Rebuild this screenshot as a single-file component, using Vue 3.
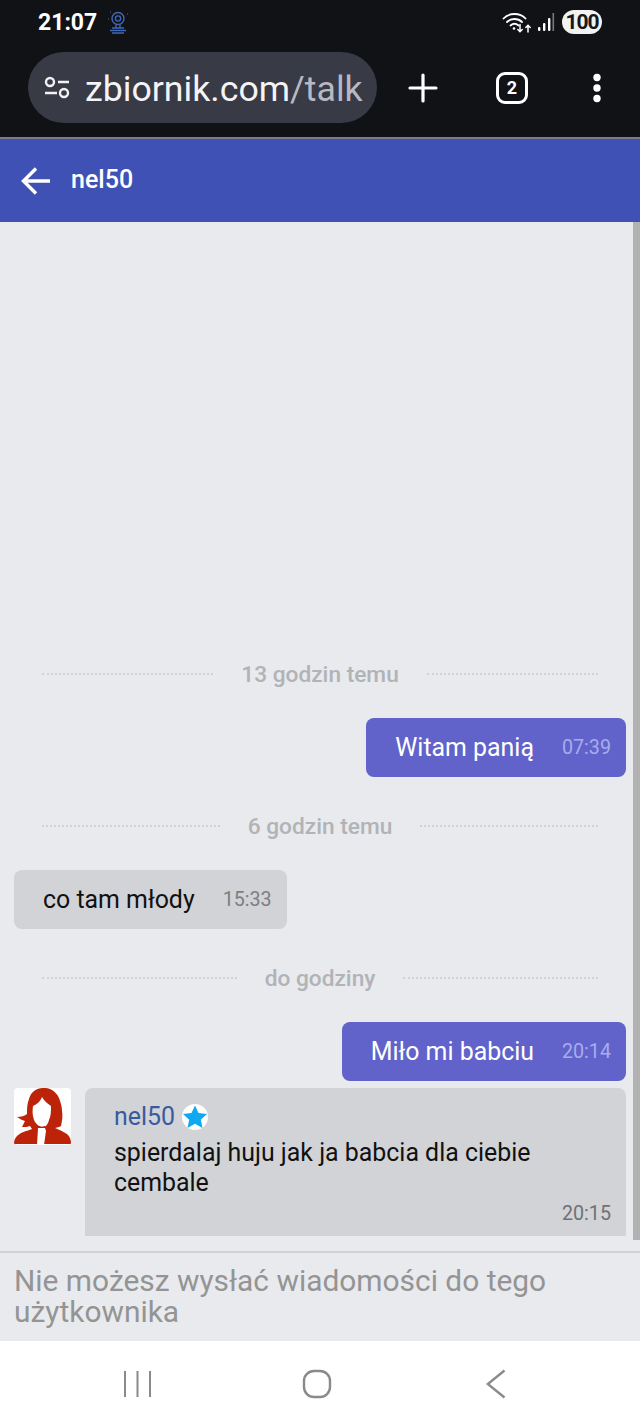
<template>
  <div class="phone">
    <!-- Status bar and browser chrome -->
    <div class="chrome">
      <div class="status">
        <div class="status-left">
          <span class="clock">21:07</span>
          <svg class="cam" width="26" height="26" viewBox="0 0 26 26" fill="none" stroke="#3f68b8" stroke-width="1.4">
            <circle cx="13" cy="9.500" r="6" />
            <circle cx="13" cy="9.500" r="2.600" />
            <path d="M11 15.500v3M15 15.500v3M7 19h12M5 21.500h16M7 24h12" />
            <path d="M3 10h1M22 5h1M5 3h1" stroke-width="1" />
          </svg>
        </div>
        <div class="status-right">
          <svg width="34" height="26" viewBox="0 0 34 26" fill="none" stroke="#fff" stroke-linecap="round">
            <path d="M1.500 9.500C7 3.500 18 3.500 23.500 9.500" stroke-width="1.800" />
            <path d="M5 13c4-4 11-4 15 0" stroke-width="1.800" />
            <path d="M8.500 16.500c2.500-2.200 5.500-2.200 8 0" stroke-width="1.800" />
            <circle cx="12" cy="19.500" r="1.300" fill="#fff" stroke="none" />
            <path d="M18 15.500v7M15.800 20.500l2.200 2.200 2.200-2.200" stroke-width="1.500" />
            <path d="M26 23v-6.500M23.800 18.500l2.200-2.200 2.200 2.200" stroke-width="1.500" />
          </svg>
          <svg class="signal" width="18" height="20" viewBox="0 0 18 20">
            <rect x="1" y="15" width="2.400" height="4" rx="1" fill="#fff" />
            <rect x="6" y="11" width="2.400" height="8" rx="1" fill="#fff" />
            <rect x="11" y="6" width="2.400" height="13" rx="1" fill="#fff" />
            <rect x="15.500" y="1" width="1.600" height="18" fill="#77797f" />
          </svg>
          <span class="battery">100</span>
        </div>
      </div>
      <div class="browser">
        <div class="url">
          <svg width="28" height="26" viewBox="0 0 28 26" fill="none" stroke="#f2f2f4" stroke-width="2.400">
            <circle cx="7" cy="7" r="4" />
            <path d="M15 7h11M2 18h12" />
            <circle cx="21" cy="18" r="4" />
          </svg>
          <span class="url-text">zbiornik.com<span class="url-path">/talk</span></span>
        </div>
        <svg class="plus" width="30" height="30" viewBox="0 0 30 30" stroke="#fff" stroke-width="3.200" stroke-linecap="round">
          <path d="M15 2v26M2 15h26" />
        </svg>
        <div class="tabs">2</div>
        <svg class="more" width="12" height="32" viewBox="0 0 12 32" fill="#fff">
          <circle cx="6" cy="5.500" r="3.700" />
          <circle cx="6" cy="16" r="3.700" />
          <circle cx="6" cy="26.500" r="3.700" />
        </svg>
      </div>
    </div>

    <!-- Conversation header -->
    <div class="header">
      <svg width="30" height="28" viewBox="0 0 30 28" fill="none" stroke="#fff" stroke-width="3.400">
        <path d="M29 14H3M15 1.500L2.500 14 15 26.500" />
      </svg>
      <span class="header-name">nel50</span>
    </div>

    <!-- Messages -->
    <div class="chat">
      <div class="scrollbar"></div>
      <template v-for="group in groups" :key="group.label">
        <div class="divider"><span>{{ group.label }}</span></div>
        <div v-for="msg in group.messages" :key="msg.time" :class="['row', msg.mine ? 'mine' : 'theirs', { tight: msg.tight }]">
          <div class="bubble">
            <span class="bubble-text">{{ msg.text }}</span>
            <span class="bubble-time">{{ msg.time }}</span>
          </div>
        </div>
      </template>
      <div class="profile-msg">
        <svg class="avatar" width="57" height="57" viewBox="0 0 57 57">
          <rect width="57" height="57" rx="4" fill="#fff" />
          <path fill="#bd2309" d="M29 0C22 0 17 4 15 11c-2 5-2 10-2 15-2 2-6 3-10 3 3 2 5 3 8 4-1 2-2 4-3 6 3 0 6 0 8-1l2 3c-5 2-11 3-15 7-2 2-3 5-3 7 0 1 1 1 2 1h53c1 0 2 0 2-1 0-3-1-6-3-8-2-2-8-5-13-7 3-1 5-1 6-2 1-5 2-10 1-15 0-5-2-11-4-15-2-3-5-7-12-8z" />
          <path fill="#fff" d="M28 9c-2 5-5 7-9 9-1 7 0 12 2 16 2 3 5 5 8 5 3 0 5-3 6-7 2-4 2-9 2-14-3-2-7-5-9-9zM24 40h7l1 3-2 14h-7z" />
          <path fill="#bd2309" d="M24 38c2 1 5 1 7 0v1c-2 1-5 1-7 0z" />
        </svg>
        <div class="profile-body">
          <div class="profile-name">
            <span>nel50</span>
            <svg width="26" height="26" viewBox="0 0 26 26">
              <circle cx="13" cy="13" r="13" fill="#fff" />
              <path fill="#0fa9f2" d="M13 1.500l3.500 7.500 8.500 1-6.200 5.700 1.700 8.300-7.500-4.200-7.500 4.200 1.700-8.300L1 10l8.500-1z" />
            </svg>
          </div>
          <div class="profile-text">spierdalaj huju jak ja babcia dla ciebie cembale</div>
          <div class="profile-time">20:15</div>
        </div>
      </div>
    </div>

    <div class="notice">Nie możesz wysłać wiadomości do tego użytkownika</div>

    <!-- Android navigation -->
    <div class="nav">
      <svg width="29" height="28" viewBox="0 0 29 28" stroke="#8a8a8a" stroke-width="2">
        <path d="M2 1v26M14.500 1v26M27 1v26" />
      </svg>
      <svg width="30" height="30" viewBox="0 0 30 30" fill="none" stroke="#8a8a8a" stroke-width="2.400">
        <rect x="2" y="2" width="26" height="26" rx="10" />
      </svg>
      <svg class="nav-back" width="20" height="30" viewBox="0 0 20 30" fill="none" stroke="#8a8a8a" stroke-width="2.400">
        <path d="M18.500 1.500L1.800 15l16.700 13.500" />
      </svg>
    </div>
  </div>
</template>

<script setup>
const groups = [
  {
    label: '13 godzin temu',
    messages: [{ text: 'Witam panią', time: '07:39', mine: true }]
  },
  {
    label: '6 godzin temu',
    messages: [{ text: 'co tam młody', time: '15:33', mine: false }]
  },
  {
    label: 'do godziny',
    messages: [{ text: 'Miło mi babciu', time: '20:14', mine: true, tight: true }]
  }
]
</script>

<style>
body {
  margin: 0;
  background: #fff;
}
</style>

<style scoped>
.phone {
  width: 640px;
  height: 1427px;
  display: flex;
  flex-direction: column;
  font-family: Roboto, "Liberation Sans", sans-serif;
  overflow: hidden;
}

/* =========================
   BROWSER CHROME
========================= */
.chrome {
  height: 137px;
  background: #111216;
  border-bottom: 2px solid #7b7d84;
  flex-shrink: 0;
}

.status {
  height: 44px;
  padding: 0 38px;
  display: flex;
  align-items: center;
  justify-content: space-between;
}

.status-left,
.status-right {
  display: flex;
  align-items: center;
}

.clock {
  color: #fff;
  font-size: 23px;
  font-weight: 700;
}

.cam {
  margin-left: 8px;
}

.signal {
  margin: 0 7px 0 1px;
}

.battery {
  width: 40px;
  height: 24px;
  line-height: 24px;
  border-radius: 12px;
  background: #f2f2f2;
  color: #16171a;
  font-size: 21px;
  font-weight: 700;
  letter-spacing: -1px;
  text-align: center;
}

.browser {
  height: 71px;
  margin-top: 8px;
  padding-left: 28px;
  display: flex;
  align-items: center;
}

.url {
  width: 349px;
  height: 71px;
  box-sizing: border-box;
  padding-left: 15px;
  border-radius: 36px;
  background: #383a46;
  display: flex;
  align-items: center;
  gap: 14px;
  overflow: hidden;
}

.url-text {
  padding-top: 2px;
  color: #f4f4f6;
  font-size: 35.700px;
  white-space: nowrap;
}

.url-path {
  color: #b7b9c2;
}

.plus {
  margin-left: 31px;
}

.tabs {
  width: 32px;
  height: 32px;
  margin-left: 58px;
  box-sizing: border-box;
  border: 3px solid #fff;
  border-radius: 9px;
  color: #fff;
  font-size: 18px;
  font-weight: 700;
  line-height: 26px;
  text-align: center;
}

.more {
  margin-left: 63px;
}

/* =========================
   HEADER
========================= */
.header {
  height: 83px;
  padding-left: 21px;
  background: #3f51b5;
  display: flex;
  align-items: center;
  gap: 20px;
  flex-shrink: 0;
}

.header-name {
  margin-bottom: 2px;
  color: #fff;
  font-size: 25px;
  font-weight: 500;
}

/* =========================
   CHAT
========================= */
.chat {
  position: relative;
  flex: 1;
  background: #e8eaee;
  border-bottom: 2px solid #cfd1d5;
  padding: 0 14px 15px;
  display: flex;
  flex-direction: column;
  justify-content: flex-end;
}

.scrollbar {
  position: absolute;
  top: 0;
  right: 0;
  width: 7px;
  height: 1018px;
  background: #b2b2b2;
}

.divider {
  height: 30px;
  margin: 0 28px 29px;
  display: flex;
  align-items: center;
  gap: 28px;
  color: #b1b3b6;
  font-size: 22.700px;
  font-weight: 500;
}

.divider::before,
.divider::after {
  content: "";
  flex: 1;
  border-top: 2px dotted #d0d2d5;
}

.row {
  display: flex;
  margin-bottom: 34px;
}

.mine {
  justify-content: flex-end;
}

.tight {
  margin-bottom: 7px;
}

.bubble {
  height: 59px;
  padding: 0 15px 0 29px;
  border-radius: 8px;
  display: flex;
  align-items: center;
  gap: 28px;
}

.mine .bubble {
  background: #6163ca;
}

.theirs .bubble {
  background: #d1d3d7;
}

.bubble-text {
  font-size: 24.900px;
}

.mine .bubble-text {
  color: #fff;
}

.theirs .bubble-text {
  color: #111;
}

.bubble-time {
  font-size: 19.700px;
}

.mine .bubble-time {
  color: #a9acec;
}

.theirs .bubble-time {
  color: #7c7e82;
}

.profile-msg {
  display: flex;
  gap: 14px;
}

.avatar {
  flex-shrink: 0;
}

.profile-body {
  flex: 1;
  height: 148px;
  box-sizing: border-box;
  padding: 12px 15px 0 29px;
  border-radius: 8px 8px 0 0;
  background: #d1d3d7;
}

.profile-name {
  height: 33px;
  display: flex;
  align-items: center;
  gap: 7px;
  color: #3a5a9f;
  font-size: 24.900px;
}

.profile-text {
  margin-top: 5px;
  color: #111;
  font-size: 24.900px;
  line-height: 30px;
}

.profile-time {
  margin-top: 4px;
  color: #6f7175;
  font-size: 19.700px;
  text-align: right;
}

/* =========================
   FOOTER
========================= */
.notice {
  height: 88px;
  box-sizing: border-box;
  padding: 12px 14px 0;
  background: #e8eaee;
  color: #949494;
  font-size: 29.900px;
  line-height: 31px;
  flex-shrink: 0;
}

.nav {
  height: 86px;
  padding-left: 123px;
  background: #fff;
  display: flex;
  align-items: center;
  gap: 150px;
  flex-shrink: 0;
}

.nav-back {
  margin-left: 4px;
}
</style>
